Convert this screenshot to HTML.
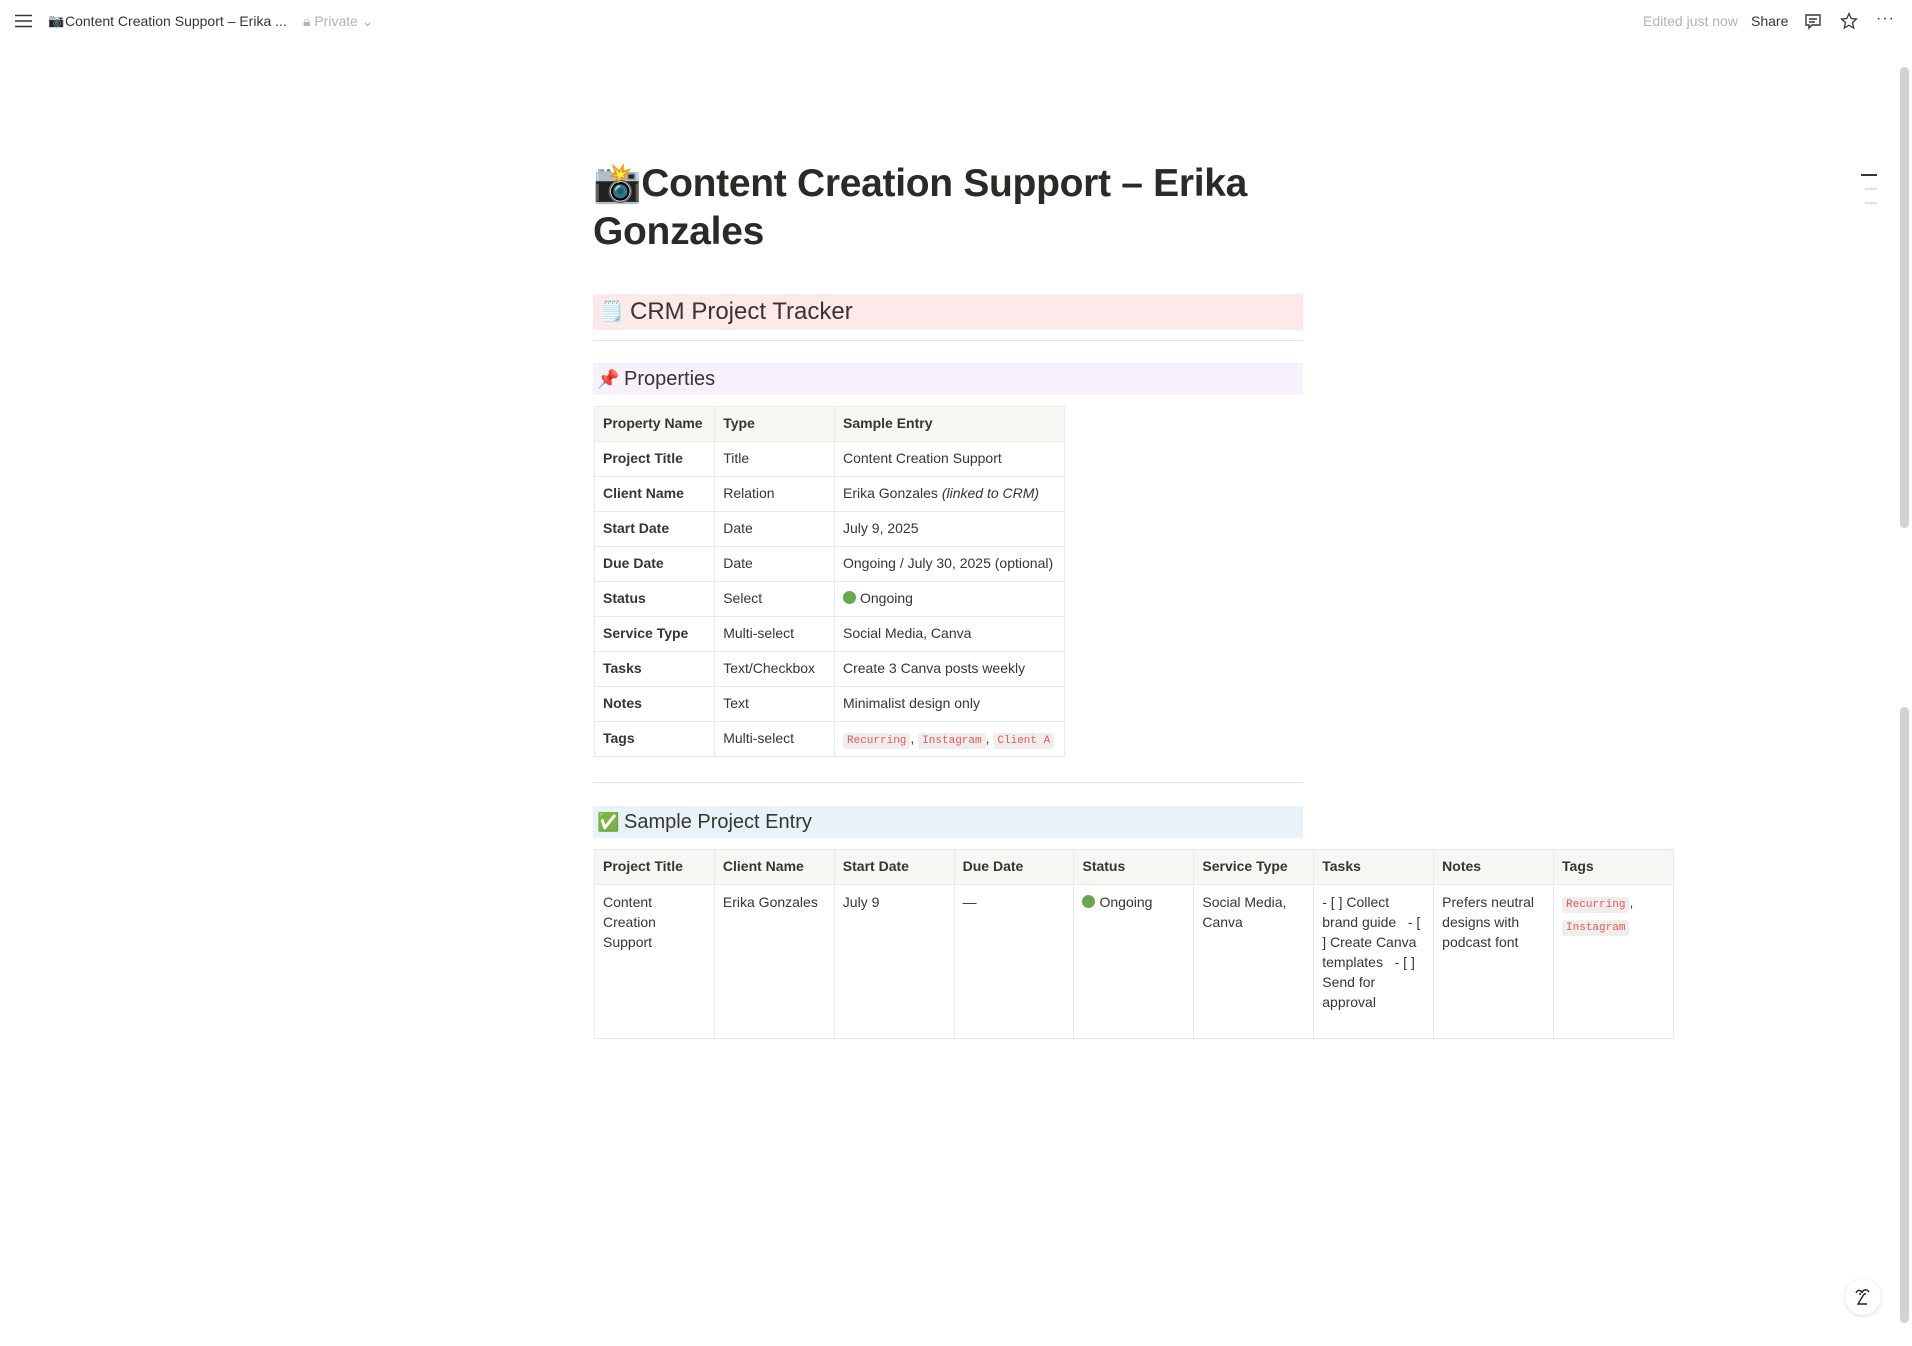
<!DOCTYPE html>
<html><head><meta charset="utf-8">
<style>
*{box-sizing:border-box;margin:0;padding:0}
html,body{width:1912px;height:1346px;overflow:hidden;background:#fff;font-family:"Liberation Sans","Noto Sans CJK SC",sans-serif;color:#37352f}
.top{position:absolute;left:0;top:0;width:1912px;height:44px;font-size:14px}
.abs{position:absolute}
h1{position:absolute;left:593px;top:160px;width:720px;font-size:39px;line-height:48px;font-weight:bold;color:#2b2a27;letter-spacing:-0.3px}
.blk{position:absolute;left:593px;width:710px}
.hdr1{top:294px;height:36px;background:#fde9e9;font-size:24px;line-height:36px;padding-left:37px}
.hdr2{top:363px;height:32px;background:#f6f1fb;font-size:20px;line-height:32px;padding-left:31px}
.hdr3{top:806px;height:32px;background:#e7f3f8;font-size:20px;line-height:32px;padding-left:31px}
.hr{height:1px;background:#e3e2e0}
table{position:absolute;border-collapse:collapse;font-size:14px;color:#37352f}
td,th{border:1px solid #e9e9e7;text-align:left;vertical-align:top;padding:8px 8px 0 8px;font-weight:normal}
th{background:#f7f6f3;font-weight:bold}
#t1 td,#t1 th{height:35px}
#t1 td:first-child{font-weight:bold}
.tag{font-family:"Liberation Mono",monospace;font-size:11px;color:#eb5757;background:#efeeec;border-radius:3px;padding:2px 4px;white-space:nowrap}
.nw{white-space:nowrap}
.dot{display:inline-block;width:13px;height:13px;border-radius:50%;background:#6aa84f;vertical-align:-1px;margin-right:4px}
#t2 td{line-height:20px;padding-top:7px;height:154px}
#t2 th{height:35px}
</style></head><body>
<div class="top">
 <svg class="abs" style="left:15px;top:14px" width="17" height="14"><path d="M0 1.5H17M0 7H17M0 12.5H17" stroke="#37352f" stroke-width="1.6"/></svg>
 <span class="abs" style="left:48px;top:13px;font-size:13px">📷</span>
 <span class="abs" style="left:65px;top:13px;color:#37352f">Content Creation Support – Erika ...</span>
 <span class="abs" style="left:303px;top:13px;color:#b3b2ae">🔒︎ Private ⌄</span>
 <span class="abs" style="left:1643px;top:13px;color:#b3b2ae">Edited just now</span>
 <span class="abs" style="left:1751px;top:13px;color:#37352f">Share</span>
 <svg class="abs" style="left:1804px;top:13px" width="18" height="18"><path d="M2 2H16V12H8L5 15V12H2Z M5 6H13M5 9H11" fill="none" stroke="#37352f" stroke-width="1.4"/></svg>
 <svg class="abs" style="left:1840px;top:12px" width="18" height="18"><path d="M9 1.5L11.2 6.5L16.5 7L12.5 10.6L13.7 16L9 13.2L4.3 16L5.5 10.6L1.5 7L6.8 6.5Z" fill="none" stroke="#37352f" stroke-width="1.3"/></svg>
 <span class="abs" style="left:1876px;top:10px;font-size:16px;letter-spacing:1px">···</span>
</div>
<div class="abs" style="left:1861px;top:174px;width:16px;height:2px;background:#37352f"></div>
<div class="abs" style="left:1865px;top:188px;width:12px;height:2px;background:#e3e2e0"></div>
<div class="abs" style="left:1865px;top:202px;width:12px;height:2px;background:#e3e2e0"></div>
<div class="abs" style="left:1900px;top:67px;width:9px;height:461px;background:#d3d2cd;border-radius:5px"></div>
<div class="abs" style="left:1900px;top:707px;width:9px;height:616px;background:#d3d2cd;border-radius:5px"></div>
<div class="abs" style="left:1845px;top:1279px;width:36px;height:36px;border-radius:50%;background:#fff;box-shadow:0 1px 4px rgba(0,0,0,.15)">
 <svg class="abs" style="left:9px;top:8px" width="18" height="20"><path d="M2 6C4 2 7 3 8 6M8 6C9 2 13 2 15 5M10 7L4 17H13" fill="none" stroke="#222" stroke-width="1.4"/><circle cx="6" cy="7" r="1" fill="#222"/><circle cx="11" cy="7" r="1" fill="#222"/></svg>
</div>

<h1>📸Content Creation Support – Erika Gonzales</h1>
<div class="blk hdr1"><span class="abs" style="left:6px;top:0;font-size:20px">🗒️</span>CRM Project Tracker</div>
<div class="blk hr" style="top:340px"></div>
<div class="blk hdr2"><span class="abs" style="left:4px;top:0;font-size:18px">📌</span>Properties</div>
<table id="t1" style="left:594px;top:406px;width:471px">
<colgroup><col style="width:121px"><col style="width:120px"><col style="width:230px"></colgroup>
<tr><th>Property Name</th><th>Type</th><th>Sample Entry</th></tr>
<tr><td>Project Title</td><td>Title</td><td>Content Creation Support</td></tr>
<tr><td>Client Name</td><td>Relation</td><td>Erika Gonzales <i>(linked to CRM)</i></td></tr>
<tr><td>Start Date</td><td>Date</td><td>July 9, 2025</td></tr>
<tr><td>Due Date</td><td>Date</td><td>Ongoing / July 30, 2025 (optional)</td></tr>
<tr><td>Status</td><td>Select</td><td><span class="dot"></span>Ongoing</td></tr>
<tr><td>Service Type</td><td>Multi-select</td><td>Social Media, Canva</td></tr>
<tr><td>Tasks</td><td>Text/Checkbox</td><td>Create 3 Canva posts weekly</td></tr>
<tr><td>Notes</td><td>Text</td><td>Minimalist design only</td></tr>
<tr><td>Tags</td><td>Multi-select</td><td class="nw"><span class="tag">Recurring</span>, <span class="tag">Instagram</span>, <span class="tag">Client A</span></td></tr>
</table>
<div class="blk hr" style="top:782px"></div>
<div class="blk hdr3"><span class="abs" style="left:4px;top:0;font-size:18px">✅</span>Sample Project Entry</div>
<table id="t2" style="left:594px;top:849px;width:1080px">
<colgroup><col span="9" style="width:120px"></colgroup>
<tr><th>Project Title</th><th>Client Name</th><th>Start Date</th><th>Due Date</th><th>Status</th><th>Service Type</th><th>Tasks</th><th>Notes</th><th>Tags</th></tr>
<tr><td>Content Creation Support</td><td>Erika Gonzales</td><td>July 9</td><td>—</td><td><span class="dot"></span>Ongoing</td><td>Social Media, Canva</td><td>- [ ] Collect brand guide &nbsp; - [ ] Create Canva templates &nbsp; - [ ] Send for approval</td><td>Prefers neutral designs with podcast font</td><td><span class="tag">Recurring</span>, <span class="tag">Instagram</span></td></tr>
</table>
</body></html>
